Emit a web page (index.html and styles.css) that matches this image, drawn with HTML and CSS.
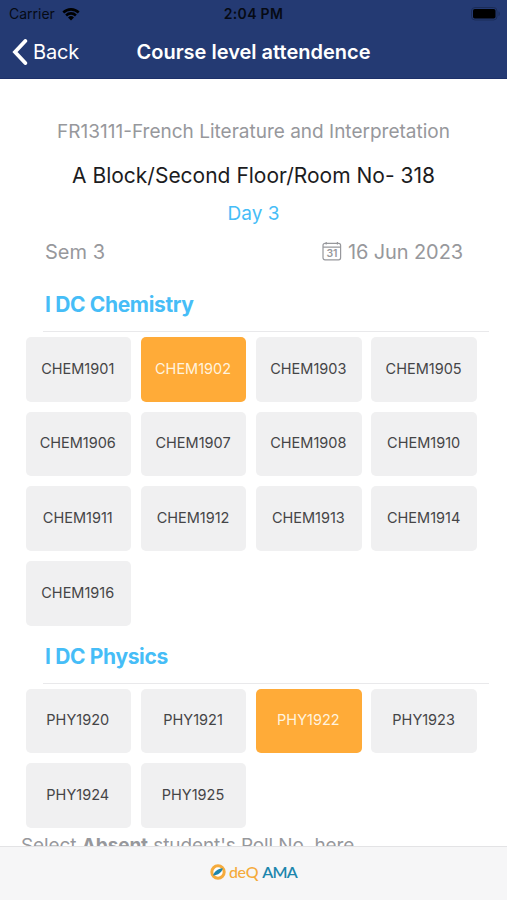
FILE: index.html
```html
<!DOCTYPE html>
<html lang="en">
<head>
    <meta charset="UTF-8">
    <meta name="viewport" content="width=device-width, initial-scale=1.0">
    <title>Course level attendence</title>
    <link rel="stylesheet" href="styles.css">
</head>
<body>
    <header class="header">
        <div class="status-bar">
            <div class="carrier">
                <span>Carrier</span>
                <svg class="wifi" viewBox="0 0 18 14" width="18" height="14">
                    <path d="M0.4 4.6a12.2 12.2 0 0 1 17.2 0l-1.8 1.9a9.6 9.6 0 0 0-13.6 0z"/>
                    <path d="M3.2 7.5a8.2 8.2 0 0 1 11.6 0l-1.8 1.9a5.7 5.7 0 0 0-8 0z"/>
                    <path d="M6 10.4a4.3 4.3 0 0 1 6 0l-3 3.1z"/>
                </svg>
            </div>
            <span class="clock">2:04 PM</span>
            <svg class="battery" viewBox="0 0 30 14" width="30" height="14">
                <rect x="0.5" y="0.5" width="25.5" height="12.5" rx="3.5" fill="none" stroke="#1b2c58"/>
                <rect x="2" y="2" width="22.5" height="9.5" rx="1.8"/>
                <path d="M27.5 4.5v4.5c1.7-.6 1.7-3.9 0-4.5z" fill="#1b2c58"/>
            </svg>
        </div>
        <nav class="nav-bar">
            <a class="back" href="#">
                <svg viewBox="0 0 16 26" width="16" height="26">
                    <path d="M13.3 2L3 13l10.3 11" fill="none" stroke="#fff" stroke-width="3.8" stroke-linecap="round"/>
                </svg>
                <span>Back</span>
            </a>
            <h1 class="title">Course level attendence</h1>
        </nav>
    </header>

    <main class="content">
        <p class="course">FR13111-French Literature and Interpretation</p>
        <p class="room">A Block/Second Floor/Room No- 318</p>
        <p class="day">Day 3</p>
        <div class="info">
            <span class="sem">Sem 3</span>
            <span class="date">
                <svg viewBox="0 0 20 20" width="20" height="20" fill="none" stroke="#97989c" stroke-width="1.2">
                    <rect x="1" y="1.4" width="17.6" height="16.4" rx="2"/>
                    <path d="M1 5.2h17.6M4.2 0v2.4M15.4 0v2.4"/>
                    <text x="9.8" y="15" class="cal-day">31</text>
                </svg>
                <span class="date-text">16 Jun 2023</span>
            </span>
        </div>

        <section class="group">
            <h2 class="group-title">I DC Chemistry</h2>
            <div class="rolls">
                <div class="roll">CHEM1901</div>
                <div class="roll absent">CHEM1902</div>
                <div class="roll">CHEM1903</div>
                <div class="roll">CHEM1905</div>
                <div class="roll">CHEM1906</div>
                <div class="roll">CHEM1907</div>
                <div class="roll">CHEM1908</div>
                <div class="roll">CHEM1910</div>
                <div class="roll">CHEM1911</div>
                <div class="roll">CHEM1912</div>
                <div class="roll">CHEM1913</div>
                <div class="roll">CHEM1914</div>
                <div class="roll">CHEM1916</div>
            </div>
        </section>

        <section class="group">
            <h2 class="group-title physics">I DC Physics</h2>
            <div class="rolls">
                <div class="roll">PHY1920</div>
                <div class="roll">PHY1921</div>
                <div class="roll absent">PHY1922</div>
                <div class="roll">PHY1923</div>
                <div class="roll">PHY1924</div>
                <div class="roll">PHY1925</div>
            </div>
        </section>

        <p class="hint">Select <b>Absent</b> student's Roll No. here</p>
    </main>

    <footer class="footer">
        <svg viewBox="0 0 16 16" width="16" height="16">
            <circle cx="8" cy="8" r="6.2" fill="#fff" stroke="#f5ab3c" stroke-width="3"/>
            <path d="M3 11.6C4 7.6 7.5 4.8 12.8 4.2 11.8 8.6 8.2 11 3 11.6z" fill="#1c86ad"/>
        </svg>
        <span class="brand-deq">deQ</span>
        <span class="brand-ama">AMA</span>
    </footer>
</body>
</html>
```
FILE: styles.css
```css
* {
    box-sizing: border-box;
}
body {
    margin: 0;
    height: 900px;
    display: flex;
    flex-direction: column;
    overflow: hidden;
    font-family: Inter, Roboto, sans-serif;
    background: #fff;
    color: #97989c;
}
h1, h2, p {
    margin: 0;
}
.header {
    flex: none;
    height: 79px;
    background: #243a73;
    border-bottom: 1px solid #1d3069;
}
.status-bar {
    display: grid;
    grid-template-columns: 1fr auto 1fr;
    align-items: center;
    height: 27px;
    padding: 0 6px 0 9px;
    color: #060a14;
    font-size: 14px;
}
.carrier {
    display: flex;
    align-items: center;
    gap: 7px;
}
.clock {
    margin-right: 3px;
    font-weight: 600;
    font-size: 14px;
    letter-spacing: 0.3px;
}
.battery {
    justify-self: end;
}
.nav-bar {
    display: grid;
    grid-template-columns: 1fr auto 1fr;
    align-items: center;
    height: 50px;
    padding: 0 12px;
    color: #fff;
}
.back {
    display: flex;
    align-items: center;
    gap: 5px;
    color: #fff;
    font-size: 20px;
    letter-spacing: -0.2px;
    text-decoration: none;
}
.title {
    font-size: 20px;
    font-weight: 600;
}
.content {
    flex: 1;
    min-height: 0;
    overflow: hidden;
    padding-top: 40px;
}
.course, .room, .day {
    text-align: center;
    white-space: nowrap;
}
.course {
    font-size: 19px;
    line-height: 26px;
}
.room {
    margin-top: 17px;
    font-size: 21px;
    line-height: 28px;
    color: #1c1c1e;
}
.day {
    margin-top: 12px;
    font-size: 19px;
    line-height: 24px;
    color: #46bdf7;
}
.info {
    display: flex;
    justify-content: space-between;
    padding: 12px 44px 0 45px;
    font-size: 20px;
    line-height: 28px;
}
.date {
    display: flex;
    align-items: center;
    gap: 6px;
}
.date-text {
    letter-spacing: -0.1px;
}
.cal-day {
    font-size: 10.5px;
    font-weight: 600;
    letter-spacing: -0.3px;
    text-anchor: middle;
    fill: #97989c;
    stroke: none;
}
.group-title {
    height: 66px;
    margin: 0 18px 5px 43px;
    padding: 25px 0 0 2px;
    border-bottom: 1px solid #e9e9eb;
    font-size: 21px;
    font-weight: 700;
    letter-spacing: -0.35px;
    line-height: 28px;
    color: #46bdf7;
}
.physics {
    height: 58px;
    padding-top: 17px;
}
.rolls {
    display: grid;
    grid-template-columns: repeat(4, 105.5px);
    gap: 9.8px;
    padding-left: 25.5px;
}
.roll {
    display: flex;
    align-items: center;
    justify-content: center;
    height: 64.8px;
    padding: 0 1px 2px 0;
    border-radius: 5px;
    background: #f0f0f1;
    color: #454547;
    font-size: 14.5px;
}
.absent {
    background: #ffab38;
    color: #fff3df;
}
.hint {
    margin: 4px 0 0 21px;
    font-size: 19px;
    letter-spacing: -0.1px;
    line-height: 28px;
}
.footer {
    flex: none;
    display: flex;
    align-items: center;
    justify-content: center;
    height: 54px;
    padding-bottom: 4px;
    border-top: 1px solid #e3e3e5;
    background: #f6f6f7;
    font-family: Lato, sans-serif;
    font-size: 16px;
}
.brand-deq {
    margin: 0 4px 0 3px;
    color: #f5ab3c;
    font-weight: 500;
    letter-spacing: -0.3px;
}
.brand-ama {
    color: #1c86ad;
    font-weight: 600;
    letter-spacing: -0.7px;
}
```
